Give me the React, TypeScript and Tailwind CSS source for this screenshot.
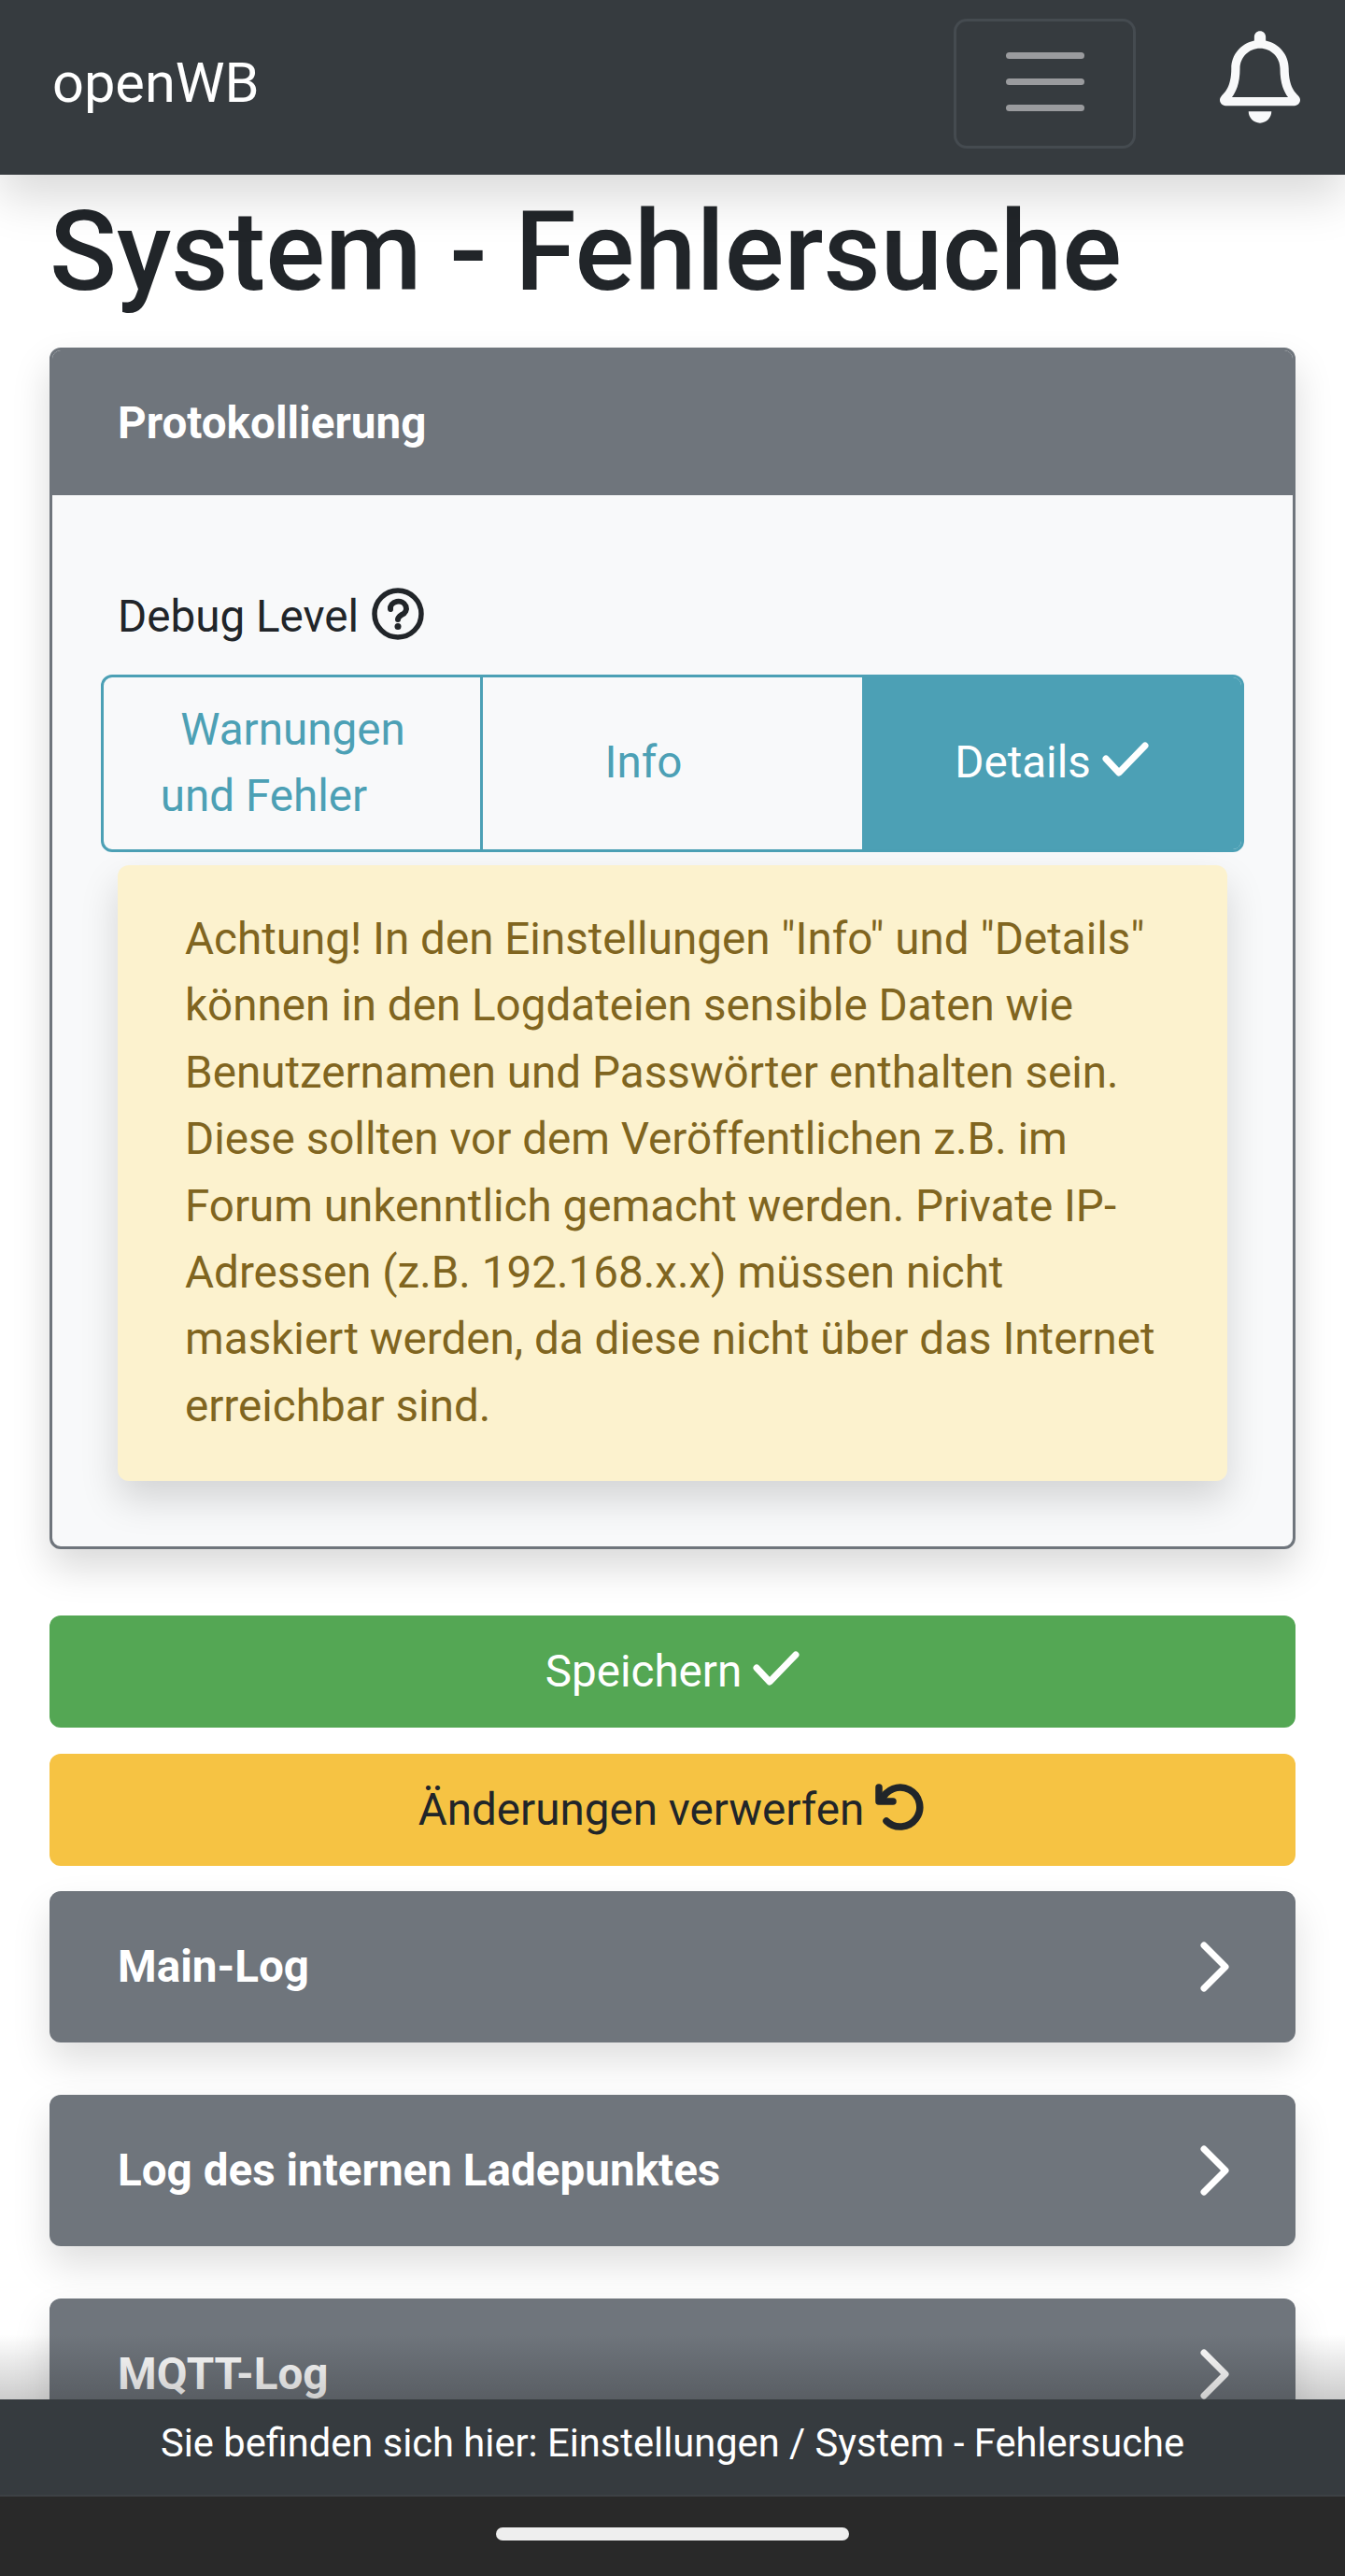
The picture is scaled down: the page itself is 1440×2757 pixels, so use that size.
import React from 'react';
import { FaRegBell } from 'react-icons/fa';

const CheckIcon: React.FC = () => (
  <svg viewBox="0 0 50 38" className="mb-[6px] h-[38px] w-[50px]" fill="none" stroke="currentColor" strokeWidth="7" strokeLinecap="round" strokeLinejoin="round">
    <path d="M4 18 L18 33 L46 4" />
  </svg>
);

const UndoIcon: React.FC = () => (
  <svg viewBox="0 0 52 50" className="mb-[6px] h-[50px] w-[52px]" fill="none" stroke="currentColor" strokeWidth="7.5" strokeLinecap="round" strokeLinejoin="round">
    <path d="M4 4 V19 H19" />
    <path d="M7 18 A21 21 0 1 1 12 40" />
  </svg>
);

const HelpIcon: React.FC = () => (
  <svg viewBox="0 0 56 56" className="mb-[8px] h-[56px] w-[56px]" fill="none" stroke="currentColor" strokeWidth="5.5" strokeLinecap="round">
    <circle cx="28" cy="28" r="25" />
    <path d="M20 23 a8.5 7.5 0 1 1 12 6 c-3 2 -4 3 -4 5" strokeWidth="6" />
    <circle cx="28" cy="41.5" r="3.5" fill="currentColor" stroke="none" />
  </svg>
);

const ChevronIcon: React.FC = () => (
  <svg viewBox="0 0 32 54" className="h-[54px] w-[32px]" fill="none" stroke="currentColor" strokeWidth="7" strokeLinecap="round" strokeLinejoin="round">
    <path d="M4 4 L27 27 L4 50" />
  </svg>
);

const LogRow: React.FC<{ title: string }> = ({ title }) => (
  <div className="flex h-[162px] shrink-0 items-center justify-between rounded-[12px] bg-[#6f757c] pl-[73px] pr-[70px] text-white shadow-[0_20px_40px_rgba(0,0,0,0.13)]">
    <span className="text-[47.6px] font-bold">{title}</span>
    <ChevronIcon />
  </div>
);

const App: React.FC = () => {
  return (
    <div className="relative h-[2757px] overflow-hidden bg-white font-[Roboto,sans-serif] text-[#212529]">
      <header className="relative z-10 flex h-[187px] items-center bg-[#363b3f] pb-[8px] pl-[56px] shadow-[0_24px_48px_rgba(0,0,0,0.15)]">
        <span className="text-[59.5px] leading-none text-white">openWB</span>
        <div className="absolute left-[1021px] top-[20px] flex h-[139px] w-[195px] flex-col items-center justify-center gap-[21px] rounded-[14px] border-[3px] border-[#454b50] pb-[4px]">
          <span className="h-[7px] w-[84px] rounded-full bg-[#9a9b9e]" />
          <span className="h-[7px] w-[84px] rounded-full bg-[#9a9b9e]" />
          <span className="h-[7px] w-[84px] rounded-full bg-[#9a9b9e]" />
        </div>
        <FaRegBell className="absolute left-[1306px] top-[33px] h-[99px] w-[86px] text-[#f8f9fa]" />
      </header>

      <main className="px-[53px]">
        <h1 className="mt-[21px] text-[119px] font-medium leading-[124px]">System - Fehlersuche</h1>

        <section className="mt-[40px] overflow-hidden rounded-[12px] border-[3px] border-[#6f757c] bg-[#f8f9fa] shadow-[0_20px_40px_rgba(0,0,0,0.15)]">
          <div className="flex h-[155px] items-center bg-[#6f757c] pl-[70px] pt-[2px] text-[47.6px] font-bold text-white">Protokollierung</div>
          <div className="px-[52px] pb-[70px] pt-[95px]">
            <div className="flex items-center gap-[14px] pl-[18px] text-[47.6px] leading-[71px]">
              Debug Level <HelpIcon />
            </div>
            <div className="mt-[26px] grid h-[190px] grid-cols-3 overflow-hidden rounded-[12px] border-[3px] border-[#4ca0b5] text-[47.6px] leading-[71px] text-[#4ca0b5]">
              <div className="flex items-center justify-center border-r-[3px] border-[#4ca0b5] pl-[2px] text-center">
                <span>Warnungen<br />und Fehler<span className="inline-block w-[62px]" /></span>
              </div>
              <div className="flex items-center justify-center pb-[2px] pr-[62px]">Info</div>
              <div className="flex items-center justify-center gap-[12px] bg-[#4ca0b5] pb-[2px] text-white">Details <CheckIcon /></div>
            </div>
            <div className="mx-[18px] mt-[14px] rounded-[12px] bg-[#fcf2ce] px-[72px] py-[44px] text-[47.6px] leading-[71.4px] text-[#806520] shadow-[0_20px_40px_rgba(0,0,0,0.15)]">
              Achtung! In den Einstellungen "Info" und "Details" können in den Logdateien sensible Daten wie Benutzernamen und Passwörter enthalten sein. Diese sollten vor dem Veröffentlichen z.B. im Forum unkenntlich gemacht werden. Private IP-Adressen (z.B. 192.168.x.x) müssen nicht maskiert werden, da diese nicht über das Internet erreichbar sind.
            </div>
          </div>
        </section>

        <button className="mt-[71px] flex h-[120px] w-full items-center justify-center gap-[12px] rounded-[12px] bg-[#54a754] text-[47.6px] text-white">
          Speichern <CheckIcon />
        </button>
        <button className="mt-[28px] flex h-[120px] w-full items-center justify-center gap-[12px] rounded-[12px] bg-[#f6c343] pr-[3px] text-[47.6px] text-[#212529]">
          Änderungen verwerfen <UndoIcon />
        </button>

        <div className="mt-[27px] flex flex-col gap-[56px]">
          <LogRow title="Main-Log" />
          <LogRow title="Log des internen Ladepunktes" />
          <LogRow title="MQTT-Log" />
        </div>
      </main>

      <footer className="absolute bottom-0 left-0 right-0">
        <div className="h-[70px] bg-gradient-to-b from-transparent to-black/20" />
        <div className="flex h-[104px] items-start justify-center border-b-2 border-[#3d4145] bg-[#363b3f] pt-[17px] text-[41.65px] leading-[60px] text-white">
          Sie befinden sich hier: Einstellungen / System - Fehlersuche
        </div>
        <div className="flex h-[85px] items-start justify-center bg-[#292929] pt-[33px]">
          <span className="h-[14px] w-[378px] rounded-full bg-[#eeeeee]" />
        </div>
      </footer>
    </div>
  );
};

export default App;
